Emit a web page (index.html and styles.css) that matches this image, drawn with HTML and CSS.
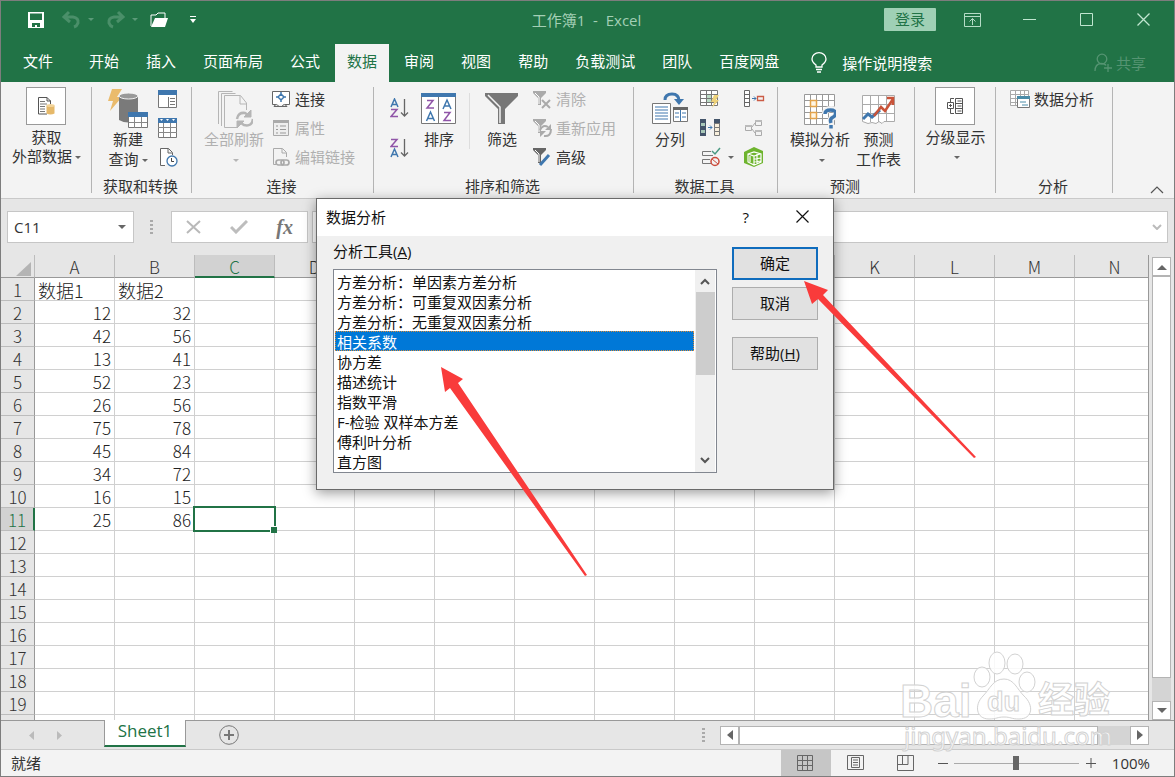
FILE: index.html
```html
<!DOCTYPE html>
<html lang="zh-CN">
<head>
<meta charset="utf-8">
<title>工作簿1 - Excel</title>
<link rel="stylesheet" href="styles.css">
</head>
<body>
<div class="app">
  <header class="titlebar">
    <div class="quick">
      <button class="bare" aria-label="保存"><svg width="16" height="16" viewBox="0 0 16 16"><path fill="#fff" fill-rule="evenodd" d="M0 0h16v16H0zM2 1.500v6.500h12V1.500zM4 11v4h3v-2h2v2h3v-4z"/></svg></button>
      <button class="bare undo" aria-label="撤消"><svg width="30" height="18" viewBox="0 0 30 18"><path d="M7 1L2 6l6 5M2 6h9q6 1 5 6q-1 3-4 4" fill="none" stroke="#4a8f69" stroke-width="3"/><path d="M26 7h6l-3 3z" fill="#5b9a78"/></svg></button>
      <button class="bare redo" aria-label="恢复"><svg width="32" height="18" viewBox="0 0 32 18"><path d="M12 1l5 5-6 5M17 6H8q-6 1-5 6q1 3 4 4" fill="none" stroke="#4a8f69" stroke-width="3"/><path d="M26 7h6l-3 3z" fill="#5b9a78"/></svg></button>
      <button class="bare" aria-label="打开"><svg width="19" height="16" viewBox="0 0 19 16"><path d="M1 14V3h5l2-2h7v5" fill="none" stroke="#fff" stroke-width="1"/><path d="M1 15L5 6h13l-3 9z" fill="#fff"/></svg></button>
      <button class="bare more" aria-label="自定义快速访问工具栏"><svg width="6" height="8" viewBox="0 0 6 8"><path d="M0 0h6v1H0zM0 3h6L3 7z" fill="#fff"/></svg></button>
    </div>
    <div class="doc-title">工作簿1&nbsp; -&nbsp; Excel</div>
    <div class="window-actions">
      <button class="login">登录</button>
      <button class="bare win" aria-label="功能区显示选项"><svg width="17" height="14" viewBox="0 0 17 14" fill="none" stroke="#b5dcc6"><path d="M.5.500h16v13H.500zM.500 3.500h16M8.500 12V5.500M5.500 8.500l3-3 3 3"/></svg></button>
      <button class="bare win" aria-label="最小化"><svg width="13" height="13" viewBox="0 0 13 13"><path d="M0 6.500h13" stroke="#c0e6d0"/></svg></button>
      <button class="bare win" aria-label="最大化"><svg width="13" height="13" viewBox="0 0 13 13"><path d="M.5.500h12v12H.500z" fill="none" stroke="#c0e6d0"/></svg></button>
      <button class="bare win" aria-label="关闭"><svg width="13" height="13" viewBox="0 0 13 13"><path d="M.5.500l12 12M12.500.500l-12 12" stroke="#c0e6d0" stroke-width="1.300"/></svg></button>
    </div>
  </header>

  <nav class="tabs">
    <button class="tab file">文件</button>
    <button class="tab">开始</button>
    <button class="tab">插入</button>
    <button class="tab">页面布局</button>
    <button class="tab">公式</button>
    <button class="tab active">数据</button>
    <button class="tab">审阅</button>
    <button class="tab">视图</button>
    <button class="tab">帮助</button>
    <button class="tab">负载测试</button>
    <button class="tab">团队</button>
    <button class="tab">百度网盘</button>
    <button class="tell"><svg width="16" height="21" viewBox="0 0 16 21" fill="none" stroke="#fff" stroke-width="1.300"><path d="M5 15v-2Q1 10 1 7a7 6.300 0 0 1 14 0q0 3-4 6v2zM5 17.500h6M6 20h4"/></svg>操作说明搜索</button>
    <button class="share"><svg width="19" height="20" viewBox="0 0 19 20" fill="none" stroke="#559472" stroke-width="1.300"><circle cx="8" cy="6" r="4.800"/><path d="M1 18q0-7 6-7.500 4 0 5 2M14 11v8M10 15h8"/></svg>共享</button>
  </nav>

  <section class="ribbon" aria-label="数据">
    <div class="group g-external">
      <div class="tools">
        <button class="big boxed"><span class="box"><svg width="18" height="20" viewBox="0 0 18 20"><path d="M10 18H1.500V1.500H10L13.500 5v3M10 1.500V5h4" fill="none" stroke="#555"/><path d="M3 5.500h5M3 8h7M3 10.500h5M3 13h5M3 15.500h5" stroke="#777"/><path d="M9.500 9.500v8q4 2 8 0v-8z" fill="#e6b96a"/><ellipse cx="13.500" cy="9.500" rx="4" ry="1.500" fill="#f3d49a"/></svg></span>获取<br><span>外部数据<i class="caret"></i></span></button>
      </div>
      <div class="caption"></div>
    </div>
    <div class="group g-transform">
      <div class="tools">
        <button class="big"><svg width="40" height="42" viewBox="0 0 40 42"><path d="M4 2h10L9 10h5L2 24l3-10H0z" fill="#eabb6c"/><path d="M11 9v24q9 5 19 0V9z" fill="#7a7a7a"/><ellipse cx="20.500" cy="9" rx="9.500" ry="3" fill="#999" stroke="#f3f3f3"/><path d="M20.500 25.500h19v15h-19z" fill="#fff" stroke="#777"/><path d="M20 25h20v5H20z" fill="#3f77ae"/><path d="M21 35.500h18M26.500 30v11M33.500 30v11" stroke="#888"/></svg>新建<br><span>查询<i class="caret"></i></span></button>
        <div class="icon-col">
          <button class="bare" aria-label="显示查询"><svg width="20" height="20" viewBox="0 0 20 20"><path d="M.5 1.500h18v17H.500z" fill="#fff" stroke="#777"/><path d="M0 1h19v5H0z" fill="#3f77ae"/><path d="M10.500 8v10M12 9.500h5M12 12.500h5M12 15.500h5" stroke="#777"/></svg></button>
          <button class="bare" aria-label="从表格"><svg width="20" height="20" viewBox="0 0 20 20"><path d="M.5.500h18v19H.500z" fill="#fff" stroke="#777"/><path d="M0 0h19v5H0z" fill="#3f77ae"/><path d="M2 1h3L3.500 3zM8 1h3L9.500 3zM14 1h3l-1.500 2z" fill="#fff"/><path d="M0 9.500h19M0 14.500h19M5.500 5v14M12.500 5v14" stroke="#888"/></svg></button>
          <button class="bare" aria-label="最近使用的源"><svg width="20" height="20" viewBox="0 0 20 20"><path d="M7 18.500H2.500v-17h8l4 4V8M10 1.500V6h4" fill="#fff" stroke="#666"/><circle cx="14" cy="14" r="5" fill="#fff" stroke="#3f77ae" stroke-width="1.300"/><path d="M13.500 11v3.500H16" fill="none" stroke="#444"/></svg></button>
        </div>
      </div>
      <div class="caption">获取和转换</div>
    </div>
    <div class="group g-connect">
      <div class="tools">
        <button class="big" disabled><svg width="38" height="42" viewBox="0 0 38 42" fill="none" stroke="#b5b5b5"><path d="M3.500 37V4.500h14M6.500 39V6.500h14M23 40.500H9.500v-32h16L31.500 16v7M25 9v8h7"/><path d="M22 32q1-7 8-6l3 2M38 32q-1 8-9 6l-3-2" stroke-width="2.500"/><path d="M36 23v7h-7zM22 41v-7h7z" fill="#b5b5b5"/></svg>全部刷新<br><i class="caret"></i></button>
        <div class="rows">
          <button class="row"><svg width="19" height="18" viewBox="0 0 19 18"><path d="M4 14.500H.500V1.500h17v13H13" fill="#fff" stroke="#666"/><path d="M9 4l3 3-3 3-3-3zM9 2v2M9 10v2M4 7h2M12 7h2" fill="none" stroke="#3f77ae" stroke-width="1.500"/><path d="M2 16.500q2-4 5 0h3q2-4 5 0z" fill="#eee" stroke="#666"/></svg>连接</button>
          <button class="row" disabled><svg width="19" height="18" viewBox="0 0 19 18"><path d="M1.500 1.500h15v15h-15z" fill="#eee" stroke="#aaa"/><path d="M1 1h16v3H1z" fill="#aaa"/><path d="M4 7h2M8 7h6M4 10.500h2M8 10.500h6M4 14h2M8 14h6" stroke="#999"/></svg>属性</button>
          <button class="row" disabled><svg width="19" height="20" viewBox="0 0 19 20" fill="none" stroke="#aaa"><path d="M4 17.500H1.500V1.500h9l4 4V10M10 2v4h4"/><rect x="4" y="13" width="8" height="5" rx="2.500" stroke-width="1.700"/><rect x="9" y="13" width="8" height="5" rx="2.500" stroke-width="1.700"/></svg>编辑链接</button>
        </div>
      </div>
      <div class="caption">连接</div>
    </div>
    <div class="group g-sort">
      <div class="tools">
        <div class="sorts">
          <button class="bare" aria-label="升序"><svg width="19" height="20" viewBox="0 0 19 20" fill="none"><path d="M1 9l3.500-8L8 9M2 6.500h5" stroke="#3f77ae" stroke-width="1.500"/><path d="M1 11.500h6L1 18.500h7" stroke="#9055a8" stroke-width="1.500"/><path d="M14.500 1v17M11 14.500l3.500 3.500 3.500-3.500" stroke="#666" stroke-width="1.300"/></svg></button>
          <button class="bare" aria-label="降序"><svg width="19" height="20" viewBox="0 0 19 20" fill="none"><path d="M1 1.500h6L1 8.500h7" stroke="#9055a8" stroke-width="1.500"/><path d="M1 19l3.500-8L8 19M2 16.500h5" stroke="#3f77ae" stroke-width="1.500"/><path d="M14.500 1v17M11 14.500l3.500 3.500 3.500-3.500" stroke="#666" stroke-width="1.300"/></svg></button>
        </div>
        <button class="big"><svg width="36" height="42" viewBox="0 0 36 42" fill="none"><path d="M.5 6.500h34v30H.500zM17.500 10v27" fill="#fff" stroke="#777"/><path d="M0 6h35v4H0z" fill="#3f77ae"/><path d="M6 13.500h6L6 21h7M23 25.500h6l-6 8h7" stroke="#9055a8" stroke-width="1.500"/><path d="M5.500 34L9.500 25l4 9M7 31.500h5M22 22l4-9 4 9M23.500 19h5" stroke="#3f77ae" stroke-width="1.500"/></svg>排序</button>
        <button class="big filter"><svg width="34" height="42" viewBox="0 0 34 42"><path d="M0 6h33v3L20 22v15h-7V22L0 9z" fill="#777"/><path d="M3 8l12 12v16" fill="none" stroke="#f3f3f3" stroke-width="1.500"/></svg>筛选</button>
        <div class="rows">
          <button class="row" disabled><svg width="19" height="20" viewBox="0 0 19 20"><path d="M0 2h13v2L8 9v7H5V9L0 4z" fill="#aaa"/><path d="M2 4l4 4v7" fill="none" stroke="#fff"/><path d="M9 11l8 8M17 11l-8 8" stroke="#aaa" stroke-width="2"/></svg>清除</button>
          <button class="row" disabled><svg width="19" height="20" viewBox="0 0 19 20"><path d="M0 1h13v2L8 8v7H5V8L0 3z" fill="#aaa"/><path d="M2 3l4 4v7" fill="none" stroke="#fff"/><path d="M7 12q3-6 8-3M18 11q0 8-7 7" fill="none" stroke="#aaa" stroke-width="2"/><path d="M18 6v6h-6zM7 19v-6h6z" fill="#aaa"/></svg>重新应用</button>
          <button class="row"><svg width="19" height="20" viewBox="0 0 19 20"><path d="M0 1h13v2L8 8v8H5V8L0 3z" fill="#666"/><path d="M2 3l4 4v8" fill="none" stroke="#fff"/><path d="M16 8L7 18" stroke="#3f77ae" stroke-width="3"/></svg>高级</button>
        </div>
      </div>
      <div class="caption">排序和筛选</div>
    </div>
    <div class="group g-data">
      <div class="tools">
        <button class="big"><svg width="36" height="42" viewBox="0 0 36 42"><path d="M.5 16.500h18v20H.500z" fill="#fff" stroke="#777"/><path d="M3 20h13M3 23h13M3 26h13M3 29h13M3 32h13" stroke="#3f77ae"/><path d="M21.500 20.500h14v14h-14z" fill="#fff" stroke="#777"/><path d="M21 20h15v3H21z" fill="#666"/><path d="M28.500 23v11M23 26h4M30 26h4M23 30h4M30 30h4" stroke="#3f77ae"/><path d="M13 13q0-6 7-6 7 0 7 7" fill="none" stroke="#3f77ae" stroke-width="3"/><path d="M22 12h10l-5 6z" fill="#3f77ae"/></svg>分列</button>
        <div class="icon-grid">
          <button class="bare" aria-label="快速填充"><svg width="20" height="20" viewBox="0 0 20 20"><path d="M.5 1.500h17v15H.500zM1 5.500h16M1 9.500h16M1 13.500h16M6.500 2v15M11.500 2v15" fill="#fff" stroke="#777"/><path d="M7 6h4v3H7zM7 10h4v3H7z" fill="#bcdcc6"/><path d="M14 6h5l-3 5h3l-7 8 2-6h-3z" fill="#eed27a"/></svg></button>
          <button class="bare" aria-label="合并计算"><svg width="22" height="20" viewBox="0 0 22 20"><path d="M1.500 1.500h5v16h-5zM2 5.500h4M2 9.500h4M2 13.500h4" fill="#fff" stroke="#666"/><path d="M9 9.500h4M11 7.500l2 2-2 2" fill="none" stroke="#3f77ae"/><path d="M14.500 7.500h6v4h-6z" fill="none" stroke="#cb5b45" stroke-width="1.300"/></svg></button>
          <button class="bare" aria-label="删除重复值"><svg width="20" height="20" viewBox="0 0 20 20"><path d="M0 1h6v17H0z" fill="#44546a"/><path d="M1 5h4v3H1zM1 12h4v3H1z" fill="#a8c8b8"/><path d="M8 9.500h4M10 7.500l2 2-2 2" fill="none" stroke="#3f77ae"/><path d="M14 1h6v5h-6z" fill="#44546a"/><path d="M14.500 5.500h5v4h-5zM14.500 9.500h5v4h-5zM14.500 13.500h5v4h-5z" fill="#f8efdc" stroke="#777"/></svg></button>
          <button class="bare" aria-label="关系"><svg width="22" height="20" viewBox="0 0 22 20" fill="none" stroke="#aaa"><path d="M2.500 7.500h6v5h-6zM12.500 2.500h6v5h-6zM12.500 12.500h6v5h-6zM9 9l3-4M9 11l3 4"/><path d="M2 7h7v2H2zM12 2h7v2h-7zM12 12h7v2h-7z" fill="#bbb" stroke="none"/></svg></button>
          <button class="bare with-caret" aria-label="数据验证"><svg width="20" height="20" viewBox="0 0 20 20" fill="none"><path d="M10 4.500H1.500v4H12M9 12.500H1.500v4H10" stroke="#777"/><path d="M11 4l3 3 5-6" stroke="#4a9a83" stroke-width="1.500"/><circle cx="14" cy="14.500" r="4" stroke="#cb4b3b" stroke-width="1.500"/><path d="M11 12l6 5" stroke="#cb4b3b"/></svg><i class="caret"></i></button>
          <button class="bare" aria-label="管理数据模型"><svg width="22" height="20" viewBox="0 0 22 20"><path d="M1 5L11 0l9 4v12l-9 4-10-4z" fill="#6eb42e"/><path d="M5 7l6-2 7 2v8l-7 3-6-3zM11 9v9M14 7v10M11 12l7-1M11 15l7-1M5 7l6 2 6-2M7 9v6" fill="none" stroke="#fff" stroke-width="1.200"/></svg></button>
        </div>
      </div>
      <div class="caption">数据工具</div>
    </div>
    <div class="group g-forecast">
      <div class="tools">
        <button class="big"><svg width="32" height="42" viewBox="0 0 32 42" fill="none"><path d="M.5 7.500h30v30H.500zM6.500 8v29M12.500 8v29M18.500 8v29M24.500 8v29M1 13.500h29M1 19.500h29M1 25.500h29M1 31.500h29" fill="#fff" stroke="#999"/><path d="M6.500 13.500h6v6h-6zM6.500 25.500h6v6h-6z" fill="#fff6e4" stroke="#e3a34a" stroke-width="1.500"/><path d="M21 27q0-5 6-5t5 5q0 2-3 3.500T27 35v6" stroke="#f3f3f3" stroke-width="6"/><path d="M21 27q0-4 5.500-4t5 4q0 2-3 3.500T27 36M27 38v3.500" stroke="#3f77ae" stroke-width="3.500"/></svg>模拟分析<br><i class="caret"></i></button>
        <button class="big"><svg width="34" height="42" viewBox="0 0 34 42" fill="none"><path d="M.5 8.500h32v26H22l-2 2-3-2-3 2-4-1-4 1-5.500-2zM1 17.500h31M1 26.500h31M8.500 9v26M16.500 9v26M24.500 9v26" fill="#fff" stroke="#aaa"/><path d="M1 32l5-5 4 3 8-7" stroke="#3f77ae" stroke-width="3"/><path d="M12 29l7-9 4 4 8-12M25 11h6v7" stroke="#c95339" stroke-width="2.500"/></svg>预测<br>工作表</button>
      </div>
      <div class="caption">预测</div>
    </div>
    <div class="group g-outline">
      <div class="tools">
        <button class="big boxed"><span class="box"><svg width="18" height="20" viewBox="0 0 18 20" fill="none" stroke="#555"><path d="M9.500 2.500h7v15h-7zM10 7.500h6M10 12.500h6M11.500 5h4M11.500 10h4M11.500 15h4M1.500 6.500h6v6h-6zM4.500 8v3M3 9.500h3M4.500 6V2.500H8M4.500 13v4.500H8"/></svg></span>分级显示<br><i class="caret"></i></button>
      </div>
      <div class="caption"></div>
    </div>
    <div class="group g-analysis">
      <div class="tools">
        <button class="row"><svg width="20" height="18" viewBox="0 0 20 18"><path d="M.5.500h18v15H.500zM1 4.500h17M1 8.500h17M1 12.500h17M5.500 1v15M10.500 1v15M14.500 1v15" fill="#fff" stroke="#aaa"/><path d="M7.500 6.500h12v11h-12z" fill="#fff" stroke="#777"/><path d="M7 6h13v3H7z" fill="#4b8ca8"/><path d="M10 12h6M12 15h6" stroke="#4b8ca8"/></svg>数据分析</button>
      </div>
      <div class="caption">分析</div>
    </div>
    <button class="bare collapse" aria-label="折叠功能区"><svg width="14" height="8" viewBox="0 0 14 8"><path d="M1 7l6-6 6 6" fill="none" stroke="#555" stroke-width="1.200"/></svg></button>
  </section>

  <section class="formula-bar">
    <div class="name-box"><input aria-label="名称框" value="C11"><i class="caret"></i></div>
    <span class="dots"><i></i><i></i><i></i><i></i></span>
    <div class="fx-tools">
      <button class="bare" aria-label="取消输入"><svg width="16" height="14" viewBox="0 0 16 14"><path d="M1 1l13 12M14 1L1 13" stroke="#b9b9b9" stroke-width="2"/></svg></button>
      <button class="bare" aria-label="输入"><svg width="18" height="14" viewBox="0 0 18 14"><path d="M1 7l5 5L17 1" fill="none" stroke="#bdbdbd" stroke-width="3"/></svg></button>
      <button class="bare fx">fx</button>
    </div>
    <div class="formula"><input aria-label="编辑栏"><svg width="10" height="6" viewBox="0 0 10 6"><path d="M1 1l4 4 4-4" fill="none" stroke="#bbb" stroke-width="2"/></svg></div>
  </section>

  <main class="sheet">
    <div class="grid"><table id="cells"></table></div>
    <div class="vscroll">
      <button aria-label="向上滚动"><svg width="10" height="6" viewBox="0 0 10 6"><path d="M0 6l5-5 5 5z" fill="#666"/></svg></button>
      <span class="thumb"></span>
      <button aria-label="向下滚动"><svg width="10" height="6" viewBox="0 0 10 6"><path d="M0 0l5 5 5-5z" fill="#666"/></svg></button>
    </div>
  </main>

  <div class="sheet-bar">
    <div class="sheet-nav">
      <button class="bare" aria-label="上一张"><svg width="5" height="9" viewBox="0 0 5 9"><path d="M5 0v9L0 4.500z" fill="#bbb"/></svg></button>
      <button class="bare" aria-label="下一张"><svg width="5" height="9" viewBox="0 0 5 9"><path d="M0 0v9l5-4.500z" fill="#bbb"/></svg></button>
    </div>
    <button class="sheet-tab">Sheet1</button>
    <button class="bare add" aria-label="新工作表"><svg width="20" height="20" viewBox="0 0 20 20" fill="none" stroke="#777"><circle cx="10" cy="10" r="9.300"/><path d="M5 10h10M10 5v10" stroke-width="2"/></svg></button>
    <span class="dots"><i></i><i></i><i></i><i></i></span>
    <div class="hscroll">
      <button aria-label="向左滚动"><svg width="6" height="10" viewBox="0 0 6 10"><path d="M6 0v10L0 5z" fill="#666"/></svg></button>
      <span class="thumb"></span>
      <button aria-label="向右滚动"><svg width="6" height="10" viewBox="0 0 6 10"><path d="M0 0v10l6-5z" fill="#666"/></svg></button>
    </div>
  </div>

  <footer class="status">
    <span>就绪</span>
    <div class="views">
      <button class="view on" aria-label="普通"><svg width="17" height="16" viewBox="0 0 17 16" fill="none" stroke="#666"><path d="M.5.500h15v15H.500zM1 5.500h14M1 10.500h14M5.500 1v14M10.500 1v14"/></svg></button>
      <button class="view" aria-label="页面布局"><svg width="17" height="16" viewBox="0 0 17 16" fill="none" stroke="#666"><path d="M.5.500h16v14H.500zM4.500 2.500h8v10h-8zM6 5h5M6 7.500h5M6 10h5"/></svg></button>
      <button class="view" aria-label="分页预览"><svg width="17" height="16" viewBox="0 0 17 16" fill="none" stroke="#666"><path d="M.5.500h16v15H.500zM1 9.500h10V1M5.500 1v8"/></svg></button>
    </div>
    <button class="bare step" aria-label="缩小"><svg width="10" height="10" viewBox="0 0 10 10"><path d="M0 5.500h10" stroke="#555"/></svg></button>
    <input class="zoom" type="range" min="0" max="100" value="50" aria-label="显示比例">
    <button class="bare step" aria-label="放大"><svg width="10" height="10" viewBox="0 0 10 10"><path d="M0 5.500h10M5 0v10" stroke="#555"/></svg></button>
    <span class="percent">100%</span>
  </footer>

  <div class="dialog" role="dialog" aria-labelledby="dlg-title">
    <div class="dialog-title">
      <h2 id="dlg-title">数据分析</h2>
      <button class="bare" aria-label="帮助主题">?</button>
      <button class="bare" aria-label="关闭对话框"><svg width="13" height="13" viewBox="0 0 13 13"><path d="M.5.500l12 12M12.500.500l-12 12" stroke="#111" stroke-width="1.200"/></svg></button>
    </div>
    <div class="dialog-body">
      <div class="tool-pane">
        <label for="tools">分析工具(<u>A</u>)</label>
        <div class="list">
          <select id="tools" size="10">
            <option>方差分析：单因素方差分析</option>
            <option>方差分析：可重复双因素分析</option>
            <option>方差分析：无重复双因素分析</option>
            <option selected>相关系数</option>
            <option>协方差</option>
            <option>描述统计</option>
            <option>指数平滑</option>
            <option>F-检验 双样本方差</option>
            <option>傅利叶分析</option>
            <option>直方图</option>
          </select>
          <div class="list-scroll">
            <svg width="10" height="7" viewBox="0 0 10 7"><path d="M1 6l4-4 4 4" fill="none" stroke="#555" stroke-width="2"/></svg>
            <span></span>
            <svg width="10" height="7" viewBox="0 0 10 7"><path d="M1 1l4 4 4-4" fill="none" stroke="#555" stroke-width="2"/></svg>
          </div>
        </div>
      </div>
      <div class="dialog-actions">
        <button class="default">确定</button>
        <button>取消</button>
        <button class="help">帮助(<u>H</u>)</button>
      </div>
    </div>
  </div>

  <svg class="watermark" width="216" height="104" viewBox="0 0 216 104">
    <g fill="#fff" fill-opacity=".85" stroke="#d2d2d2" stroke-width="1">
      <ellipse cx="80" cy="27" rx="8" ry="10"/><ellipse cx="95" cy="13" rx="8" ry="11"/><ellipse cx="113" cy="14" rx="8" ry="10"/><ellipse cx="125" cy="32" rx="8" ry="10"/>
      <path d="M102 29c10 0 13 10 20 17 10 9 9 23-5 23-8 0-8-2-15-2s-7 2-15 2c-13 0-15-14-6-23 7-7 10-17 21-17z"/>
      <text x="-2" y="67" class="wm-latin">Bai</text>
      <text x="85" y="61" class="wm-du">du</text>
      <text x="136" y="63" class="wm-cjk">经验</text>
      <text x="2" y="95" class="wm-url">jingyan.baidu.com</text>
    </g>
  </svg>
  <svg class="arrows" width="540" height="300" viewBox="440 280 540 300" fill="#f93b3b">
    <path d="M441 367l22 12-5 4L587 575l-2 1L450 388l-5 4z"/>
    <path d="M804 281l24 9-5 5L976 457l-2 1L818 299l-6 5z"/>
  </svg>
</div>
<script src="sheet.js"></script>
</body>
</html>
```

FILE: styles.css
```css
* { box-sizing: border-box; }
body {
  margin: 0;
  font: 15px/20px "Open Sans", "Noto Sans CJK SC", sans-serif;
  color: #333;
}
button, input, select { font: inherit; color: inherit; }
button { padding: 0; border: 0; background: none; }
svg { display: block; flex: none; }

.app {
  position: relative;
  display: flex;
  flex-direction: column;
  height: 100vh;
  border: 1px solid #7d7d7d;
  background: #e6e6e6;
  overflow: hidden;
}
.bare { display: flex; align-items: center; justify-content: center; }
.caret {
  display: inline-block;
  border: 3px solid transparent;
  border-top-color: #666;
  border-bottom: 0;
  vertical-align: middle;
}

/* Title bar */
.titlebar {
  display: grid;
  grid-template-columns: 1fr auto 1fr;
  align-items: center;
  height: 43px;
  padding: 0 2px 6px 0;
  background: #217346;
}
.quick { display: flex; align-items: center; padding-left: 27px; }
.undo { margin: 0 14px 0 18px; }
.undo svg, .redo svg { overflow: visible; }
.redo { margin-right: 12px; }
.more { margin-left: 21px; }
.doc-title { color: #a3cfb5; }
.window-actions { display: flex; justify-content: flex-end; align-items: center; }
.login {
  width: 52px;
  height: 23px;
  margin-right: 8px;
  padding-bottom: 2px;
  background: #9fd0b5;
  border-radius: 1px;
  color: #217346;
}
.win { width: 57px; height: 24px; }

/* Ribbon tabs */
.tabs {
  display: flex;
  gap: 3px;
  height: 38px;
  padding-left: 10px;
  background: #217346;
  color: #fff;
}
.tab { padding: 0 12px 5px; white-space: nowrap; }
.file { margin-right: 9px; }
.tab.active { background: #f3f3f3; color: #217346; }
.tell, .share { display: flex; align-items: center; gap: 15px; padding-bottom: 1px; }
.tell { margin-left: 17px; }
.share { gap: 3px; margin: 0 28px 0 auto; color: #559472; }

/* Ribbon */
.ribbon {
  display: flex;
  height: 117px;
  background: #f3f3f3;
  border-bottom: 1px solid #c9c9c9;
}
.group {
  display: flex;
  flex-direction: column;
  padding-top: 5px;
  background: linear-gradient(#b4b4b4, #b4b4b4) right 5px / 1px 106px no-repeat;
}
.tools { display: flex; flex: 1; align-items: flex-start; }
.caption { height: 20px; margin-bottom: 1px; padding-right: 3px; text-align: center; line-height: 18px; }
.g-external { width: 91px; }
.g-transform { width: 100px; }
.g-connect { width: 182px; }
.g-sort { width: 260px; }
.g-data { width: 144px; }
.g-forecast { width: 137px; }
.g-outline { width: 81px; }
.g-analysis { width: 117px; }
.g-external .tools, .g-outline .tools { justify-content: center; }
.g-transform .tools { padding-left: 16px; gap: 10px; }
.g-connect .tools { padding-left: 12px; gap: 8px; }
.g-sort .tools { padding-left: 16px; gap: 12px; }
.g-data .tools { padding-left: 18px; gap: 12px; }
.g-forecast .tools { padding-left: 12px; gap: 6px; }
.g-analysis .tools { padding-left: 14px; }
.big { line-height: 20px; white-space: nowrap; }
.big > svg { margin: 0 auto; }
.big.boxed { line-height: 19px; }
.box {
  display: flex;
  align-items: center;
  justify-content: center;
  width: 40px;
  height: 38px;
  margin: 0 auto 3px;
  border: 1px solid #999;
  background: #fff;
}
.big .caret { margin-left: 3px; }
button:disabled { color: #b0b0b0; }
button:disabled .caret { border-top-color: #b5b5b5; }
.icon-col { display: grid; gap: 9px; padding-top: 2px; }
.rows { display: grid; align-content: start; }
.row { display: flex; align-items: center; gap: 4px; height: 29px; white-space: nowrap; }
.rows, .g-analysis .row { margin-top: -3px; }
.sorts { display: grid; gap: 20px; padding-top: 11px; }
.filter {
  margin-right: 2px;
  padding-left: 16px;
  background: linear-gradient(#ddd, #ddd) left 6px / 1px 70px no-repeat;
}
.icon-grid {
  display: grid;
  grid-template-columns: 20px 22px;
  gap: 9px 23px;
  padding-top: 2px;
}
.with-caret { gap: 7px; width: 34px; }
.collapse { margin: auto 10px 4px auto; }

/* Formula bar */
.formula-bar { display: flex; height: 56px; padding: 12px 6px; }
.name-box, .fx-tools, .formula {
  display: flex;
  align-items: center;
  border: 1px solid #c6c6c6;
  background: #fff;
}
.name-box { width: 127px; padding: 0 7px 0 6px; }
.formula-bar input { flex: 1; min-width: 0; padding: 0; border: 0; background: none; outline: 0; }
.name-box .caret { border-width: 4px 4px 0; }
.dots { display: grid; gap: 2px; align-content: center; }
.dots i { width: 3px; height: 2px; background: #aaa; }
.formula-bar .dots { margin: 0 18px 0 16px; }
.fx-tools { width: 137px; justify-content: space-between; padding: 0 14px; }
.fx { font: italic bold 20px/24px "Liberation Serif", serif; color: #777; }
.formula { flex: 1; margin-left: 4px; padding-right: 5px; }

/* Sheet grid */
.sheet { display: flex; flex: 1; min-height: 0; }
.grid { flex: 1; min-width: 0; overflow: hidden; border-right: 1px solid #999; }
table { width: 1154px; border-collapse: separate; border-spacing: 0; table-layout: fixed; }
th, td {
  height: 23px;
  padding: 2px 3px 0;
  border: solid #d0d0d0;
  border-width: 0 1px 1px 0;
  font: 300 17px/20px "Noto Sans CJK SC", sans-serif;
}
td { position: relative; background: #fff; color: #222; text-align: right; }
td.label { text-align: left; font-size: 18px; }
th { background: #e6e6e6; border-color: #bcbcbc; padding: 2px 0 0; }
thead th { border-bottom-color: #999; }
tbody th { border-right-color: #999; }
.corner { width: 34px; }
.corner svg { margin: 4px 3px 0 auto; }
thead th.current { background: #d2d2d2; color: #217346; border-bottom: 2px solid #217346; line-height: 19px; }
tbody th.current { background: #d2d2d2; color: #217346; border-right: 2px solid #217346; }
td.selected::before {
  content: "";
  position: absolute;
  z-index: 1;
  inset: -2px;
  border: 2px solid #217346;
}
td.selected::after {
  content: "";
  position: absolute;
  z-index: 2;
  right: -3px;
  bottom: -3px;
  width: 6px;
  height: 6px;
  border: solid #fff;
  border-width: 1px 0 0 1px;
  background: #217346;
}
.vscroll { display: flex; flex-direction: column; width: 25px; padding: 2px 4px 0 3px; }
.vscroll button, .hscroll button {
  display: flex;
  align-items: center;
  justify-content: center;
  flex: none;
  width: 19px;
  height: 19px;
  border: 1px solid #b4b4b4;
  background: #fff;
}
.vscroll .thumb { flex: 1; width: 19px; margin-bottom: 23px; border: 1px solid #b4b4b4; background: #fff; box-shadow: 0 23px #d4d4d4; }
.vscroll button { position: relative; }

/* Sheet tabs */
.sheet-bar { display: flex; height: 30px; border-top: 1px solid #999; border-bottom: 1px solid #c9c9c9; }
.sheet-nav { display: flex; gap: 23px; padding-left: 28px; }
.sheet-tab {
  width: 82px;
  height: 27px;
  margin: -1px 33px 0 42px;
  padding-bottom: 3px;
  border: 1px solid #999;
  border-top: 0;
  border-bottom: 2px solid #217346;
  background: #fff;
  color: #217346;
  font-size: 17px;
}
.sheet-bar .dots { margin: 0 15px 0 auto; }
.hscroll { display: flex; align-items: center; width: 429px; margin-right: 25px; }
.hscroll .thumb { flex: 1; height: 19px; margin-right: 32px; border: 1px solid #b4b4b4; background: #fff; box-shadow: 32px 0 #d4d4d4; }
.hscroll button { position: relative; }

/* Status bar */
.status {
  display: flex;
  align-items: center;
  height: 26px;
  padding: 0 24px 0 10px;
  background: #f3f3f3;
}
.views { display: flex; align-self: stretch; margin-left: auto; }
.view { display: flex; align-items: center; justify-content: center; width: 50px; }
.view.on { background: #c6c6c6; }
.step { width: 10px; margin: 0 6px 0 7px; }
.zoom {
  width: 125px;
  height: 14px;
  margin: 0;
  appearance: none;
  background: linear-gradient(#aaa, #aaa) center / 100% 1px no-repeat;
}
.zoom::-webkit-slider-thumb { appearance: none; width: 6px; height: 14px; background: #666; }
.percent { margin-left: 10px; }

/* Dialog */
.dialog {
  position: absolute;
  left: 315px;
  top: 197px;
  width: 518px;
  border: 1px solid #6a6a6a;
  background: #f0f0f0;
  color: #111;
  box-shadow: 0 3px 12px rgba(0, 0, 0, .4);
}
.dialog-title { display: flex; align-items: center; height: 37px; padding: 0 24px 2px 0; background: #fff; }
.dialog-title h2 { margin: 0 auto 0 9px; font: inherit; }
.dialog-title button + button { margin-left: 47px; }
.dialog-body { display: flex; gap: 15px; padding: 5px 15px 16px 16px; }
.tool-pane { flex: 1; }
.tool-pane label { display: block; height: 28px; }
.list { display: flex; height: 204px; padding: 1px; border: 1px solid #828790; background: #fff; }
select {
  flex: 1;
  min-width: 0;
  height: 200px;
  padding: 0;
  border: 0;
  outline: 0;
  background: #fff;
  overflow: hidden;
}
option { height: 20px; min-height: 20px; padding: 0 2px 2px; line-height: 18px; }
option:checked {
  background: #0078d7 linear-gradient(#0078d7, #0078d7);
  color: #fff;
  outline: 1px dotted #d98b3a;
  outline-offset: -1px;
}
.list-scroll {
  display: flex;
  flex-direction: column;
  align-items: center;
  width: 20px;
  margin: -1px 0 -1px 1px;
  padding: 8px 0;
  background: #f0f0f0;
}
.list-scroll span { width: 19px; height: 83px; margin: 7px 0 auto; background: #cdcdcd; }
.dialog-actions { display: flex; flex-direction: column; gap: 7px; width: 86px; padding-top: 6px; }
.dialog-actions button { height: 33px; padding-bottom: 2px; border: 1px solid #adadad; background: #e1e1e1; }
.dialog-actions .default { border: 2px solid #0f6cbd; }
.dialog-actions .help { margin-top: 10px; }

/* Overlays */
.watermark, .arrows { position: absolute; pointer-events: none; }
.watermark { right: 56px; bottom: 22px; overflow: visible; }
.wm-latin { font: bold 46px "Liberation Sans", sans-serif; }
.wm-du { font: bold 27px "Liberation Sans", sans-serif; }
.wm-cjk { font: bold 36px "Noto Sans CJK SC", sans-serif; }
.wm-url { font: 24px "Noto Sans", sans-serif; }
.arrows { left: 439px; top: 279px; }
```

FILE: sheet.js
```js
const columns = "ABCDEFGHIJKLMN".split("");
const rows = [
  ["数据1", "数据2"], [12, 32], [42, 56], [13, 41], [52, 23], [26, 56],
  [75, 78], [45, 84], [34, 72], [16, 15], [25, 86]
];
const current = { column: "C", row: 11 };
const numberedRows = 19;

const corner = '<th class="corner"><svg width="15" height="14" viewBox="0 0 15 14"><path d="M15 0v14H0z" fill="#b4b4b4"/></svg></th>';
let html = "<thead><tr>" + corner;
for (const c of columns) {
  html += `<th${c === current.column ? ' class="current"' : ""}>${c}</th>`;
}
html += "</tr></thead><tbody>";
for (let r = 1; r <= numberedRows + 1; r++) {
  const number = r <= numberedRows ? r : "";
  html += `<tr><th${r === current.row ? ' class="current"' : ""}>${number}</th>`;
  columns.forEach((c, i) => {
    const value = (rows[r - 1] || [])[i] ?? "";
    const selected = r === current.row && c === current.column;
    const name = selected ? "selected" : typeof value === "string" && value ? "label" : "";
    html += `<td${name ? ` class="${name}"` : ""}>${value}</td>`;
  });
  html += "</tr>";
}
document.getElementById("cells").innerHTML = html + "</tbody>";
```
